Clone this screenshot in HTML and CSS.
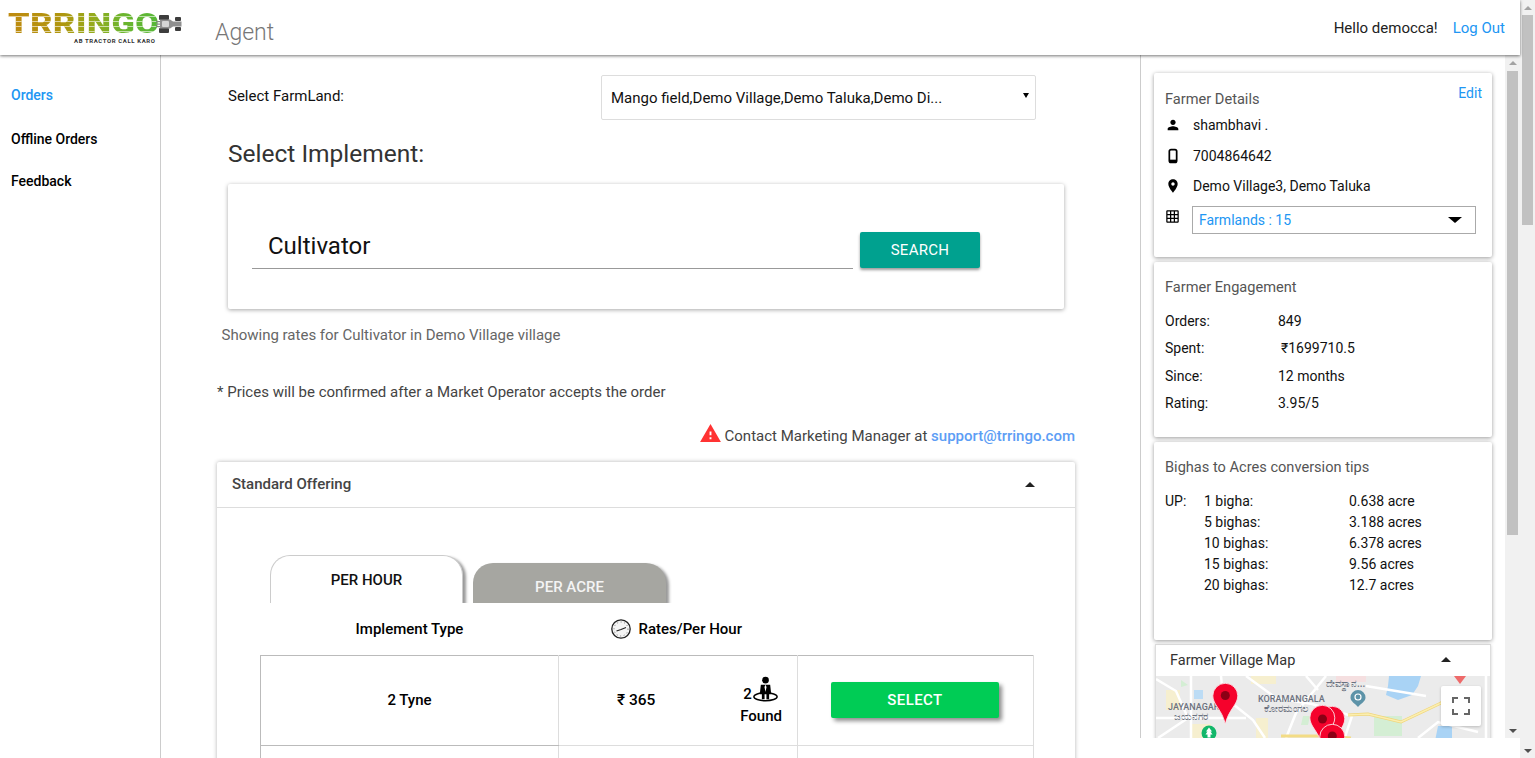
FILE: index.html
```html
<!DOCTYPE html>
<html lang="en">
<head>
  <meta charset="UTF-8" />
  <title>Trringo Agent</title>
  <link rel="stylesheet" href="styles.css">
</head>
<body>
  <div class="app">
    <header class="topbar">
      <div class="logo">
        <div class="logo-mark">
          <span class="logo-word">TRRINGO</span>
          <svg class="logo-tractor" viewBox="0 0 27 18" width="27" height="18">
            <rect x="0" y="6" width="4" height="1.200" fill="#888"/>
            <rect x="0" y="8.500" width="4" height="1.200" fill="#888"/>
            <rect x="0" y="11" width="4" height="1.200" fill="#888"/>
            <rect x="3" y="0" width="10" height="5" rx="1" fill="#3d3d3d"/>
            <rect x="3" y="13" width="10" height="5" rx="1" fill="#3d3d3d"/>
            <rect x="19" y="2" width="6" height="4" rx="1" fill="#3d3d3d"/>
            <rect x="19" y="12" width="6" height="4" rx="1" fill="#3d3d3d"/>
            <path d="M4 4.500h10l3 2h8.500v5H17l-3 2H4z" fill="#8f8f8f"/>
            <rect x="6" y="6" width="7" height="6" rx="1" fill="#d5d5d5"/>
          </svg>
        </div>
        <span class="logo-tag">AB TRACTOR CALL KARO</span>
      </div>
      <span class="agent-title">Agent</span>
      <div class="user-box">
        <span>Hello democca!</span>
        <a class="logout" href="#">Log Out</a>
      </div>
    </header>

    <div class="content">
      <nav class="sidenav">
        <a class="nav-link nav-active" href="#">Orders</a>
        <a class="nav-link" href="#">Offline Orders</a>
        <a class="nav-link" href="#">Feedback</a>
      </nav>

      <main class="main">
        <div class="farm-row">
          <span class="farm-label">Select FarmLand:</span>
          <div class="farm-select">
            <span>Mango field,Demo Village,Demo Taluka,Demo Di...</span>
            <i class="farm-caret"></i>
          </div>
        </div>

        <h2 class="implement-title">Select Implement:</h2>

        <div class="search-card">
          <div class="search-input">Cultivator</div>
          <button class="search-btn">SEARCH</button>
        </div>

        <p class="rates-note">Showing rates for Cultivator in Demo Village village</p>
        <p class="price-note">* Prices will be confirmed after a Market Operator accepts the order</p>

        <p class="contact-line">
          <svg class="warn-icon" viewBox="1 2 22 19" width="21" height="18"><path d="M1 21h22L12 2 1 21zm12-3h-2v-2h2v2zm0-4h-2v-4h2v4z"/></svg>
          <span>Contact Marketing Manager at <a href="#">support@trringo.com</a></span>
        </p>

        <section class="offering">
          <div class="offering-head">
            <span>Standard Offering</span>
            <i class="caret-up offering-caret"></i>
          </div>
          <div class="offering-body">
            <div class="tabs">
              <div class="tab tab-active">PER HOUR</div>
              <div class="tab tab-idle">PER ACRE</div>
            </div>
            <table class="rates">
              <colgroup>
                <col class="col-type"><col class="col-rate"><col class="col-action">
              </colgroup>
              <thead>
                <tr>
                  <th>Implement Type</th>
                  <th colspan="2" class="rate-head">
                    <span class="rate-head-in">
                      <svg viewBox="0 0 20 20" width="20" height="20">
                        <circle cx="10" cy="10" r="9.200" fill="#f4f4f4" stroke="#222" stroke-width="1.300"/>
                        <circle cx="10" cy="10" r="7" fill="none" stroke="#777" stroke-width="1" stroke-dasharray="1 2.600"/>
                        <path d="M10 10.500L15 8.500M10 10.500L5.500 12" stroke="#222" stroke-width="1.100"/>
                      </svg>
                      Rates/Per Hour
                    </span>
                  </th>
                </tr>
              </thead>
              <tbody>
                <tr>
                  <td class="type-cell">2 Tyne</td>
                  <td>
                    <div class="rate-cell">
                      <span class="price">₹ 365</span>
                      <div class="found">
                        <div class="found-count">2
                          <svg viewBox="0 0 26 26" width="27" height="27">
                            <ellipse cx="13" cy="20" rx="11.200" ry="3.800" fill="none" stroke="#000" stroke-width="1.400"/>
                            <circle cx="13" cy="4" r="3.200"/>
                            <path d="M8.500 8.500h9l1 9h-2v5h-2.600v-5h-1.800v5H9.500v-5h-2z"/>
                            <path d="M13 8.500l-1 2 1 5 1-5z" fill="#fff"/>
                          </svg>
                        </div>
                        <div>Found</div>
                      </div>
                    </div>
                  </td>
                  <td class="action-cell"><button class="select-btn">SELECT</button></td>
                </tr>
                <tr class="row-next"><td></td><td></td><td></td></tr>
              </tbody>
            </table>
          </div>
        </section>
      </main>

      <aside class="side">
        <div class="side-inner">
          <div class="card card-details">
            <a class="edit-link" href="#">Edit</a>
            <div class="card-title">Farmer Details</div>
            <div class="detail-row">
              <svg class="detail-icon" viewBox="0 0 24 24"><path d="M12 12c2.210 0 4-1.790 4-4s-1.790-4-4-4-4 1.790-4 4 1.790 4 4 4zm0 2c-2.670 0-8 1.340-8 4v2h16v-2c0-2.660-5.330-4-8-4z"/></svg>
              <span>shambhavi .</span>
            </div>
            <div class="detail-row">
              <svg class="detail-icon" viewBox="0 0 24 24"><rect x="6.500" y="2.500" width="11" height="19" rx="2.500" fill="none" stroke="#000" stroke-width="2.600"/><rect x="7" y="17.500" width="10" height="3.500"/></svg>
              <span>7004864642</span>
            </div>
            <div class="detail-row">
              <svg class="detail-icon" viewBox="0 0 24 24"><path d="M12 2C8.130 2 5 5.130 5 9c0 5.250 7 13 7 13s7-7.750 7-13c0-3.870-3.130-7-7-7zm0 9.500c-1.380 0-2.500-1.120-2.500-2.500s1.120-2.500 2.500-2.500 2.500 1.120 2.500 2.500-1.120 2.500-2.500 2.500z"/></svg>
              <span>Demo Village3, Demo Taluka</span>
            </div>
            <div class="farmland-row">
              <svg class="grid-icon" viewBox="0 0 24 24"><path d="M20 2H4c-1.100 0-2 .9-2 2v16c0 1.100.9 2 2 2h16c1.100 0 2-.9 2-2V4c0-1.100-.9-2-2-2zM8 20H4v-4h4v4zm0-6H4v-4h4v4zm0-6H4V4h4v4zm6 12h-4v-4h4v4zm0-6h-4v-4h4v4zm0-6h-4V4h4v4zm6 12h-4v-4h4v4zm0-6h-4v-4h4v4zm0-6h-4V4h4v4z"/></svg>
              <div class="farmland-select">
                <span>Farmlands : 15</span>
                <i class="farmland-caret"></i>
              </div>
            </div>
          </div>

          <div class="card card-engage">
            <div class="card-title">Farmer Engagement</div>
            <div class="stat-row stat-first"><span class="stat-label">Orders:</span><span>849</span></div>
            <div class="stat-row"><span class="stat-label">Spent:</span><span class="stat-spent">₹1699710.5</span></div>
            <div class="stat-row"><span class="stat-label">Since:</span><span>12 months</span></div>
            <div class="stat-row"><span class="stat-label">Rating:</span><span>3.95/5</span></div>
          </div>

          <div class="card card-tips">
            <div class="card-title">Bighas to Acres conversion tips</div>
            <div class="tips-grid">
              <span>UP:</span><span>1 bigha:</span><span>0.638 acre</span>
              <span></span><span>5 bighas:</span><span>3.188 acres</span>
              <span></span><span>10 bighas:</span><span>6.378 acres</span>
              <span></span><span>15 bighas:</span><span>9.56 acres</span>
              <span></span><span>20 bighas:</span><span>12.7 acres</span>
            </div>
          </div>

          <div class="map-card">
            <div class="map-head">
              <span>Farmer Village Map</span>
              <i class="caret-up map-caret"></i>
            </div>
            <div class="map-view">
              <svg class="map-svg" viewBox="0 0 336 100" width="336" height="100">
                <rect width="336" height="100" fill="#ebebeb"/>
                <path d="M233 0h32l-3 10-6 9-14 5-12-5 2-9z" fill="#a9d3f5"/>
                <path d="M38 14h9v9h-9z" fill="#bcdcf5"/>
                <path d="M282 50h14v30h-20z" fill="#a9d3f5"/>
                <path d="M10 14h14v20H10zM35 48h20v14H35zM100 42h12v20h-12zM95 0h25v8H95z" fill="#f6efcf"/>
                <path d="M25 4l7 5-7 2zM147 40l7 0-2 9h-7zM218 40h28v20h-28z" fill="#d4eed4"/>
                <path d="M180 0h30v6h-30z" fill="#f5dfe0"/>
                <g fill="none" stroke="#fff" stroke-width="2.500">
                  <path d="M0 3l20 12 12 27-30 20M35 0v62M0 42h90M65 0l2 20 30 24 12 18M90 0l30 22 36 6 40 12M130 62l10-25 30-37M150 0l12 14M196 40l-10 30M262 62l20-16 40 10M210 10l60 10M330 0v62"/>
                </g>
                <path d="M192 39l20-1 33 8 40-19 14-11" fill="none" stroke="#f0d67a" stroke-width="3"/>
                <path d="M192 39l20-1 33 8 40-19 14-11" fill="none" stroke="#fbeeb0" stroke-width="1.500"/>
                <path d="M125 60h40l30 2" fill="none" stroke="#f3dc85" stroke-width="3"/>
                <text class="map-label" x="102" y="25.500">KORAMANGALA</text>
                <text class="map-label" x="12" y="33.500">JAYANAGAR</text>
                <text class="map-label map-label-kn" x="108" y="35.500">ಕೋರಮಂಗಲ</text>
                <text class="map-label map-label-kn" x="18" y="43.500">ಜಯನಗರ</text>
                <text class="map-label map-label-kn" x="170" y="11">ದೇವಸ್ಥಾನ...</text>
                <circle cx="53" cy="57" r="7.500" fill="#12b76a"/>
                <path d="M53 51.500l3 4h-1.500l2 3h-2v3h-3v-3h-2l2-3H50z" fill="#fff"/>
                <path d="M202 14a7.500 7.500 0 0 1 7.500 7.500c0 4-4.500 6-7.500 9.500-3-3.500-7.500-5.500-7.500-9.500A7.500 7.500 0 0 1 202 14z" fill="#5d93a8"/>
                <circle cx="202" cy="21" r="3" fill="none" stroke="#fff" stroke-width="1.200"/>
                <path d="M298 0h12l-6 8z" fill="#ee6a6a"/>
                <g class="pin"><path d="M69.300 7.300a12.500 12.500 0 0 1 12.500 12.500c0 9-9.500 14-12.500 28.500-3-14.500-12.500-19.500-12.500-28.500a12.500 12.500 0 0 1 12.500-12.500z"/><circle cx="69.300" cy="19.500" r="4.500"/></g>
                <g class="pin"><path transform="translate(107 23)" d="M69.300 7.300a12.500 12.500 0 0 1 12.500 12.500c0 9-9.500 14-12.500 28.500-3-14.500-12.500-19.500-12.500-28.500a12.500 12.500 0 0 1 12.500-12.500z"/></g>
                <g class="pin"><path transform="translate(97 22)" d="M69.300 7.300a12.500 12.500 0 0 1 12.500 12.500c0 9-9.500 14-12.500 28.500-3-14.500-12.500-19.500-12.500-28.500a12.500 12.500 0 0 1 12.500-12.500z"/><circle cx="166.500" cy="43" r="4.500"/></g>
                <g class="pin"><path transform="translate(107 41)" d="M69.300 7.300a12.500 12.500 0 0 1 12.500 12.500c0 9-9.500 14-12.500 28.500-3-14.500-12.500-19.500-12.500-28.500a12.500 12.500 0 0 1 12.500-12.500z"/><circle cx="176.300" cy="60" r="4.500"/></g>
              </svg>
              <button class="map-full" aria-label="Fullscreen">
                <svg viewBox="0 0 18 18" width="18" height="18"><path d="M0 6V0h6v2H2v4zM12 0h6v6h-2V2h-4zM0 12h2v4h4v2H0zM16 12h2v6h-6v-2h4z" fill="#666"/></svg>
              </button>
            </div>
          </div>
        </div>

        <div class="scrollbar scrollbar-side">
          <i class="scroll-up"></i>
          <div class="scroll-track"><div class="scroll-thumb"></div></div>
          <i class="scroll-down"></i>
        </div>
      </aside>
    </div>
  </div>

  <div class="scrollbar scrollbar-page">
    <i class="scroll-up"></i>
    <div class="scroll-track"><div class="scroll-thumb"></div></div>
    <i class="scroll-down"></i>
  </div>
</body>
</html>
```

FILE: styles.css
```css
* {
  box-sizing: border-box;
}

html, body {
  height: 100%;
}

body {
  margin: 0;
  display: flex;
  overflow: hidden;
  background-color: #fff;
  color: #000;
  font-family: Roboto, sans-serif;
  font-size: 14px;
}

a {
  text-decoration: none;
}

.app {
  flex: 1;
  min-width: 0;
  display: flex;
  flex-direction: column;
}

/* top bar */

.topbar {
  position: relative;
  z-index: 5;
  flex: none;
  height: 55px;
  display: flex;
  align-items: center;
  padding: 0 15px 0 8px;
  background-color: #fff;
  box-shadow: 0 1px 3px rgba(0, 0, 0, 0.55);
}

.logo {
  width: 207px;
  display: flex;
  flex-direction: column;
  margin-top: 2px;
}

.logo-mark {
  display: flex;
  align-items: center;
  height: 23px;
}

.logo-word {
  flex: none;
  width: 125px;
  margin-right: 25px;
  font-size: 28px;
  font-weight: 900;
  line-height: 23px;
  letter-spacing: 0.5px;
  white-space: nowrap;
  color: transparent;
  background-image:
    repeating-linear-gradient(180deg, transparent 0 4px, rgba(255, 255, 255, 0.6) 4px 5px),
    linear-gradient(90deg, #bf8a10 0%, #b0960f 35%, #96aa1c 55%, #6cb52d 75%, #55b83a 100%);
  -webkit-background-clip: text;
  background-clip: text;
  transform: scaleX(1.22);
  transform-origin: left center;
  filter: blur(0.3px);
}

.logo-tractor {
  flex: none;
  margin-left: -2px;
  filter: blur(0.3px);
}

.logo-tag {
  margin: 2px 0 0 66px;
  font-size: 6px;
  font-weight: 700;
  line-height: 8px;
  letter-spacing: 0.6px;
  color: #333;
  white-space: nowrap;
}

.agent-title {
  flex: 1;
  font-size: 23px;
  font-weight: 300;
  color: #777;
  padding-top: 10px;
}

.user-box {
  display: flex;
  gap: 15px;
  font-size: 15px;
  color: #222;
}

.logout {
  color: #2196f3;
}

/* body row */

.content {
  flex: 1;
  min-height: 0;
  display: flex;
}

.sidenav {
  flex: none;
  width: 161px;
  display: flex;
  flex-direction: column;
  padding: 31px 0 0 11px;
  border-right: 1px solid #ccc;
}

.nav-link {
  height: 42px;
  color: #000;
  font-weight: 500;
  line-height: 18px;
}

.nav-active {
  height: 44px;
  color: #2196f3;
}

.main {
  flex: none;
  width: 979px;
  overflow: hidden;
  padding: 20px 65px 0 56px;
  font-size: 15px;
  color: #333;
}

.farm-row {
  display: flex;
  margin-left: 11px;
  height: 45px;
}

.farm-label {
  width: 373px;
  padding-top: 12px;
  color: #111;
}

.farm-select {
  width: 435px;
  height: 45px;
  display: flex;
  justify-content: space-between;
  align-items: center;
  padding: 0 6px 0 9px;
  border: 1px solid #ddd;
  border-radius: 2px;
  color: #111;
}

.farm-caret {
  width: 0;
  height: 0;
  margin-bottom: 4px;
  border: 3.5px solid transparent;
  border-top: 5px solid #000;
  border-bottom: 0;
}

.implement-title {
  margin: 20px 0 0 11px;
  font-size: 24.5px;
  font-weight: 400;
  line-height: 28px;
  color: #333;
}

.search-card {
  display: flex;
  align-items: flex-start;
  width: 836px;
  height: 125px;
  margin: 16px 0 0 11px;
  padding: 38px 0 0 24px;
  border-radius: 2px;
  box-shadow: 0 1px 4px rgba(0, 0, 0, 0.35);
}

.search-input {
  width: 601px;
  height: 47px;
  padding: 9px 0 0 16px;
  border-bottom: 1px solid #999;
  font-size: 24px;
  line-height: 30px;
  color: #111;
}

.search-btn {
  width: 120px;
  height: 36px;
  margin: 10px 0 0 7px;
  border: none;
  border-radius: 2px;
  background-color: #00a18f;
  color: #fff;
  font-family: inherit;
  font-size: 15px;
  letter-spacing: 0.3px;
  box-shadow: 0 2px 3px rgba(0, 0, 0, 0.4);
}

.rates-note {
  margin: 17px 0 0 4.5px;
  line-height: 18px;
  color: #666;
}

.price-note {
  margin: 39px 0 0;
  line-height: 18px;
  color: #444;
}

.contact-line {
  display: flex;
  justify-content: flex-end;
  align-items: center;
  gap: 4px;
  margin: 22px 0 0;
  height: 26px;
  color: #444;
}

.contact-line a {
  color: #5c9df5;
  font-weight: 500;
}

.warn-icon {
  fill: #ff3333;
  margin-top: -7px;
}

/* standard offering */

.offering {
  margin-top: 13px;
  width: 858px;
  border-radius: 2px;
  box-shadow: 0 0 4px rgba(0, 0, 0, 0.3);
}

.offering-head {
  position: relative;
  height: 46px;
  display: flex;
  align-items: center;
  padding: 0 0 2px 15px;
  border-bottom: 1px solid #ddd;
  font-weight: 500;
  color: #444;
}

.caret-up {
  position: absolute;
  width: 0;
  height: 0;
  border: 5px solid transparent;
  border-top: 0;
  border-bottom: 5px solid #222;
}

.offering-caret {
  right: 40px;
  top: 20px;
}

.offering-body {
  padding: 47px 41px 0 43px;
}

.tabs {
  display: flex;
  align-items: flex-end;
  gap: 10px;
  height: 48px;
  margin-left: 10px;
  overflow: hidden;
}

.tab {
  width: 193px;
  text-align: center;
  border-radius: 20px 20px 0 0;
  box-shadow: 3px 2px 3px #999;
  font-weight: 500;
  line-height: 18px;
}

.tab-active {
  height: 48px;
  padding-top: 15px;
  border: 1px solid #ccc;
  border-bottom: 0;
  color: #111;
  background-color: #fff;
}

.tab-idle {
  height: 40px;
  padding-top: 15px;
  background-color: #a6a6a1;
  color: #f4f4f4;
}

.rates {
  width: 773px;
  table-layout: fixed;
  border-collapse: collapse;
  color: #000;
}

.col-type {
  width: 298px;
}

.col-rate {
  width: 239px;
}

.col-action {
  width: 236px;
}

.rates th {
  height: 52px;
  padding: 0;
  font-weight: 500;
  text-align: center;
}

.rates .rate-head {
  text-align: left;
  padding-left: 52px;
}

.rate-head-in {
  display: flex;
  align-items: center;
  gap: 8px;
}

.rates td {
  height: 90px;
  padding: 0;
  border: 1px solid #ddd;
  font-weight: 500;
  text-align: center;
}

.rates tbody tr:first-child td {
  border-top-color: #bbb;
}

.rates td.type-cell,
.row-next td:first-child {
  border-left-color: #bbb;
  border-bottom-color: #bbb;
}

.rates .row-next td:first-child {
  border-top-color: #bbb;
}

.rate-cell {
  display: flex;
  align-items: center;
  justify-content: space-between;
  padding: 0 15px 0 58px;
}

.price {
  font-size: 15.5px;
}

.found {
  display: flex;
  flex-direction: column;
  align-items: center;
  gap: 4px;
}

.found-count {
  display: flex;
  align-items: flex-end;
  gap: 0;
  line-height: 18px;
}

.action-cell {
  padding: 0;
}

.select-btn {
  width: 168px;
  height: 36px;
  margin-left: -1px;
  border: none;
  border-radius: 2px;
  background-color: #00cc55;
  color: #fff;
  font-family: inherit;
  font-size: 15px;
  font-weight: 500;
  letter-spacing: 0.4px;
  box-shadow: 3px 3px 4px rgba(0, 0, 0, 0.45);
}

/* right panel */

.side {
  flex: none;
  width: 380px;
  height: 683px;
  display: flex;
  border-left: 1px solid #ccc;
}

.side-inner {
  flex: none;
  width: 364px;
  overflow: hidden;
  padding: 18px 13px 0;
}

.card {
  position: relative;
  width: 338px;
  margin-bottom: 5px;
  padding: 0 11px;
  border-radius: 2px;
  box-shadow: 0 1px 4px rgba(0, 0, 0, 0.4);
  color: #111;
}

.card-title {
  font-size: 14.6px;
  line-height: 18px;
  color: #555;
}

.card-details {
  height: 184px;
  padding-top: 17px;
}

.card-details .card-title {
  margin-bottom: 2px;
}

.edit-link {
  position: absolute;
  top: 12px;
  right: 10px;
  color: #2196f3;
}

.detail-row {
  display: flex;
  align-items: center;
  gap: 12px;
  height: 30.4px;
}

.detail-icon {
  flex: none;
  width: 16px;
  height: 16px;
  margin-left: 0;
}

.grid-icon {
  flex: none;
  width: 15px;
  height: 15px;
  margin-top: 3px;
}

.farmland-row {
  display: flex;
  gap: 12px;
  margin-top: 5px;
}

.farmland-select {
  width: 284px;
  height: 28px;
  display: flex;
  align-items: center;
  justify-content: space-between;
  padding: 0 13px 0 6px;
  border: 1px solid #aaa;
  color: #2196f3;
}

.farmland-caret {
  width: 0;
  height: 0;
  border: 7px solid transparent;
  border-top: 6px solid #000;
  border-bottom: 0;
}

.card-engage {
  height: 175px;
  padding-top: 16px;
}

.stat-row {
  display: flex;
  height: 27.4px;
  align-items: center;
}

.stat-first {
  margin-top: 11.3px;
}

.stat-label {
  width: 113px;
}

.stat-spent {
  margin-left: 3px;
}

.card-tips {
  height: 198px;
  padding-top: 16px;
}

.tips-grid {
  display: grid;
  grid-template-columns: 39px 145px 1fr;
  grid-auto-rows: 21px;
  align-items: center;
  margin-top: 14px;
}

.map-card {
  width: 336px;
  margin: -1px 0 0 1px;
  border: 1px solid #ddd;
  box-shadow: 0 1px 3px rgba(0, 0, 0, 0.2);
}

.map-head {
  position: relative;
  height: 31px;
  display: flex;
  align-items: center;
  padding-left: 14px;
  font-size: 14.5px;
  color: #333;
}

.map-caret {
  left: 285px;
  top: 12px;
}

.map-view {
  position: relative;
  height: 100px;
  overflow: hidden;
}

.map-svg {
  display: block;
}

.map-label {
  font-family: Roboto, sans-serif;
  font-size: 9px;
  font-weight: 500;
  fill: #6b7280;
}

.map-label-kn {
  font-family: "Noto Sans", "DejaVu Sans", sans-serif;
  font-size: 10px;
}

.pin path {
  fill: #f5022c;
  stroke: #fbe3e6;
  stroke-width: 0.9;
}

.pin circle {
  fill: #8c0015;
}

.map-full {
  position: absolute;
  top: 10px;
  left: 285px;
  width: 40px;
  height: 40px;
  display: flex;
  align-items: center;
  justify-content: center;
  padding: 0;
  border: none;
  border-radius: 2px;
  background-color: #fff;
  box-shadow: 0 1px 3px rgba(0, 0, 0, 0.2);
}

/* fake scrollbars */

.scrollbar {
  flex: none;
  width: 15px;
  display: flex;
  flex-direction: column;
  background-color: #f1f1f1;
}

.scroll-track {
  flex: 1;
  padding: 0 2px;
}

.scroll-thumb {
  background-color: #c1c1c1;
}

.scroll-up,
.scroll-down {
  flex: none;
  height: 15px;
  display: flex;
  align-items: center;
  justify-content: center;
}

.scroll-up::before,
.scroll-down::before {
  content: "";
  border: 4px solid transparent;
}

.scroll-up::before {
  border-top: 0;
  border-bottom: 4px solid #a3a3a3;
}

.scroll-down::before {
  border-bottom: 0;
  border-top: 4px solid #505050;
}

.scrollbar-side .scroll-track {
  padding-top: 1px;
}

.scrollbar-side .scroll-thumb {
  height: 464px;
}

.scrollbar-page .scroll-thumb {
  height: 210px;
}
```
